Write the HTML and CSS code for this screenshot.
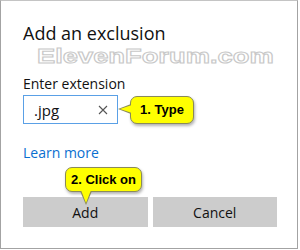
FILE: index.html
```html
<!DOCTYPE html>
<html lang="en">
    <head>
        <meta charset="UTF-8">
        <meta name="viewport" content="width=device-width, initial-scale=1.0">
        <title>Add an exclusion</title>
        <link rel="stylesheet" href="styles.css">
    </head>
<body>
    <div class="dialog">
        <h1 class="title">Add an exclusion</h1>
        <div class="watermark"><span>ElevenForum.com</span></div>

        <label class="field-label" for="ext">Enter extension</label>
        <div class="input-row">
            <div class="input-box">
                <span class="input-value">.jpg</span>
                <svg class="clear-icon" width="10" height="10" viewBox="0 0 10 10">
                    <path d="M1 1 L9 9 M9 1 L1 9" stroke="#555" stroke-width="1.1" fill="none"/>
                </svg>
            </div>
            <div class="callout callout-left">1. Type</div>
        </div>

        <a class="learn-more" href="#">Learn more</a>

        <div class="callout callout-down">2. Click on</div>

        <div class="buttons">
            <button class="btn">Add</button>
            <button class="btn">Cancel</button>
        </div>
    </div>
</body>
</html>
```

FILE: styles.css
```css
body {
    margin: 0;
    padding: 0;
    background-color: #fff;
    font-family: "Open Sans", "Noto Sans", sans-serif;
}
.dialog {
    width: 298px;
    height: 249px;
    box-sizing: border-box;
    border: 1px solid #a3a3a3;
    border-top-color: #c4c4c4;
    padding: 20px 0 0 22px;
}
.title {
    margin: 0;
    font-size: 18px;
    line-height: 24px;
    font-weight: normal;
    color: #111;
}
.watermark {
    margin-top: 1px;
    height: 20px;
    margin-left: 14px;
}
.watermark span {
    display: inline-block;
    font-family: "Liberation Sans", Arial, sans-serif;
    font-weight: bold;
    font-size: 21px;
    line-height: 20px;
    color: #fff;
    -webkit-text-stroke: 1px #c8c8c8;
    transform: scaleX(1.3);
    transform-origin: left center;
}
.field-label {
    display: block;
    margin-top: 8px;
    font-size: 14px;
    line-height: 19px;
    color: #111;
}
.input-row {
    display: flex;
    align-items: center;
    margin-top: 2px;
}
.input-box {
    width: 95px;
    height: 29px;
    box-sizing: border-box;
    border: 1px solid #5aa0e6;
    display: flex;
    align-items: center;
    justify-content: space-between;
    padding: 0 9px 0 10px;
}
.input-value {
    font-size: 15px;
    color: #111;
}
.callout {
    position: relative;
    background-color: #ffff00;
    border: 1px solid #8a8a5a;
    border-radius: 7px;
    box-shadow: 1px 2px 3px rgba(0, 0, 0, 0.3);
    font-family: "Liberation Sans", Arial, sans-serif;
    font-weight: bold;
    font-size: 13px;
    color: #000;
    text-align: center;
    box-sizing: border-box;
}
.callout-left {
    margin-left: 12px;
    width: 64px;
    height: 28px;
    line-height: 26px;
}
.callout-left::before {
    content: "";
    position: absolute;
    left: -13px;
    top: 7px;
    border-style: solid;
    border-width: 5px 13px 5px 0;
    border-color: transparent #8a8a5a transparent transparent;
}
.callout-left::after {
    content: "";
    position: absolute;
    left: -11px;
    top: 8px;
    border-style: solid;
    border-width: 4px 12px 4px 0;
    border-color: transparent #ffff00 transparent transparent;
}
.learn-more {
    display: block;
    margin-top: 19px;
    font-size: 14px;
    line-height: 19px;
    color: #0a6fd0;
    text-decoration: none;
}
.callout-down {
    margin: 5px 0 0 42px;
    width: 77px;
    height: 25px;
    line-height: 23px;
    z-index: 1;
}
.callout-down::before {
    content: "";
    position: absolute;
    left: 14px;
    bottom: -14px;
    border-style: solid;
    border-width: 14px 6px 0 6px;
    border-color: #8a8a5a transparent transparent transparent;
}
.callout-down::after {
    content: "";
    position: absolute;
    left: 15px;
    bottom: -12px;
    border-style: solid;
    border-width: 13px 5px 0 5px;
    border-color: #ffff00 transparent transparent transparent;
}
.buttons {
    display: flex;
    gap: 5px;
    margin-top: 5px;
    width: 254px;
}
.btn {
    flex: 1;
    height: 30px;
    border: none;
    background-color: #cccccc;
    font-family: "Open Sans", "Noto Sans", sans-serif;
    font-size: 14px;
    color: #111;
    padding: 0;
}
```
